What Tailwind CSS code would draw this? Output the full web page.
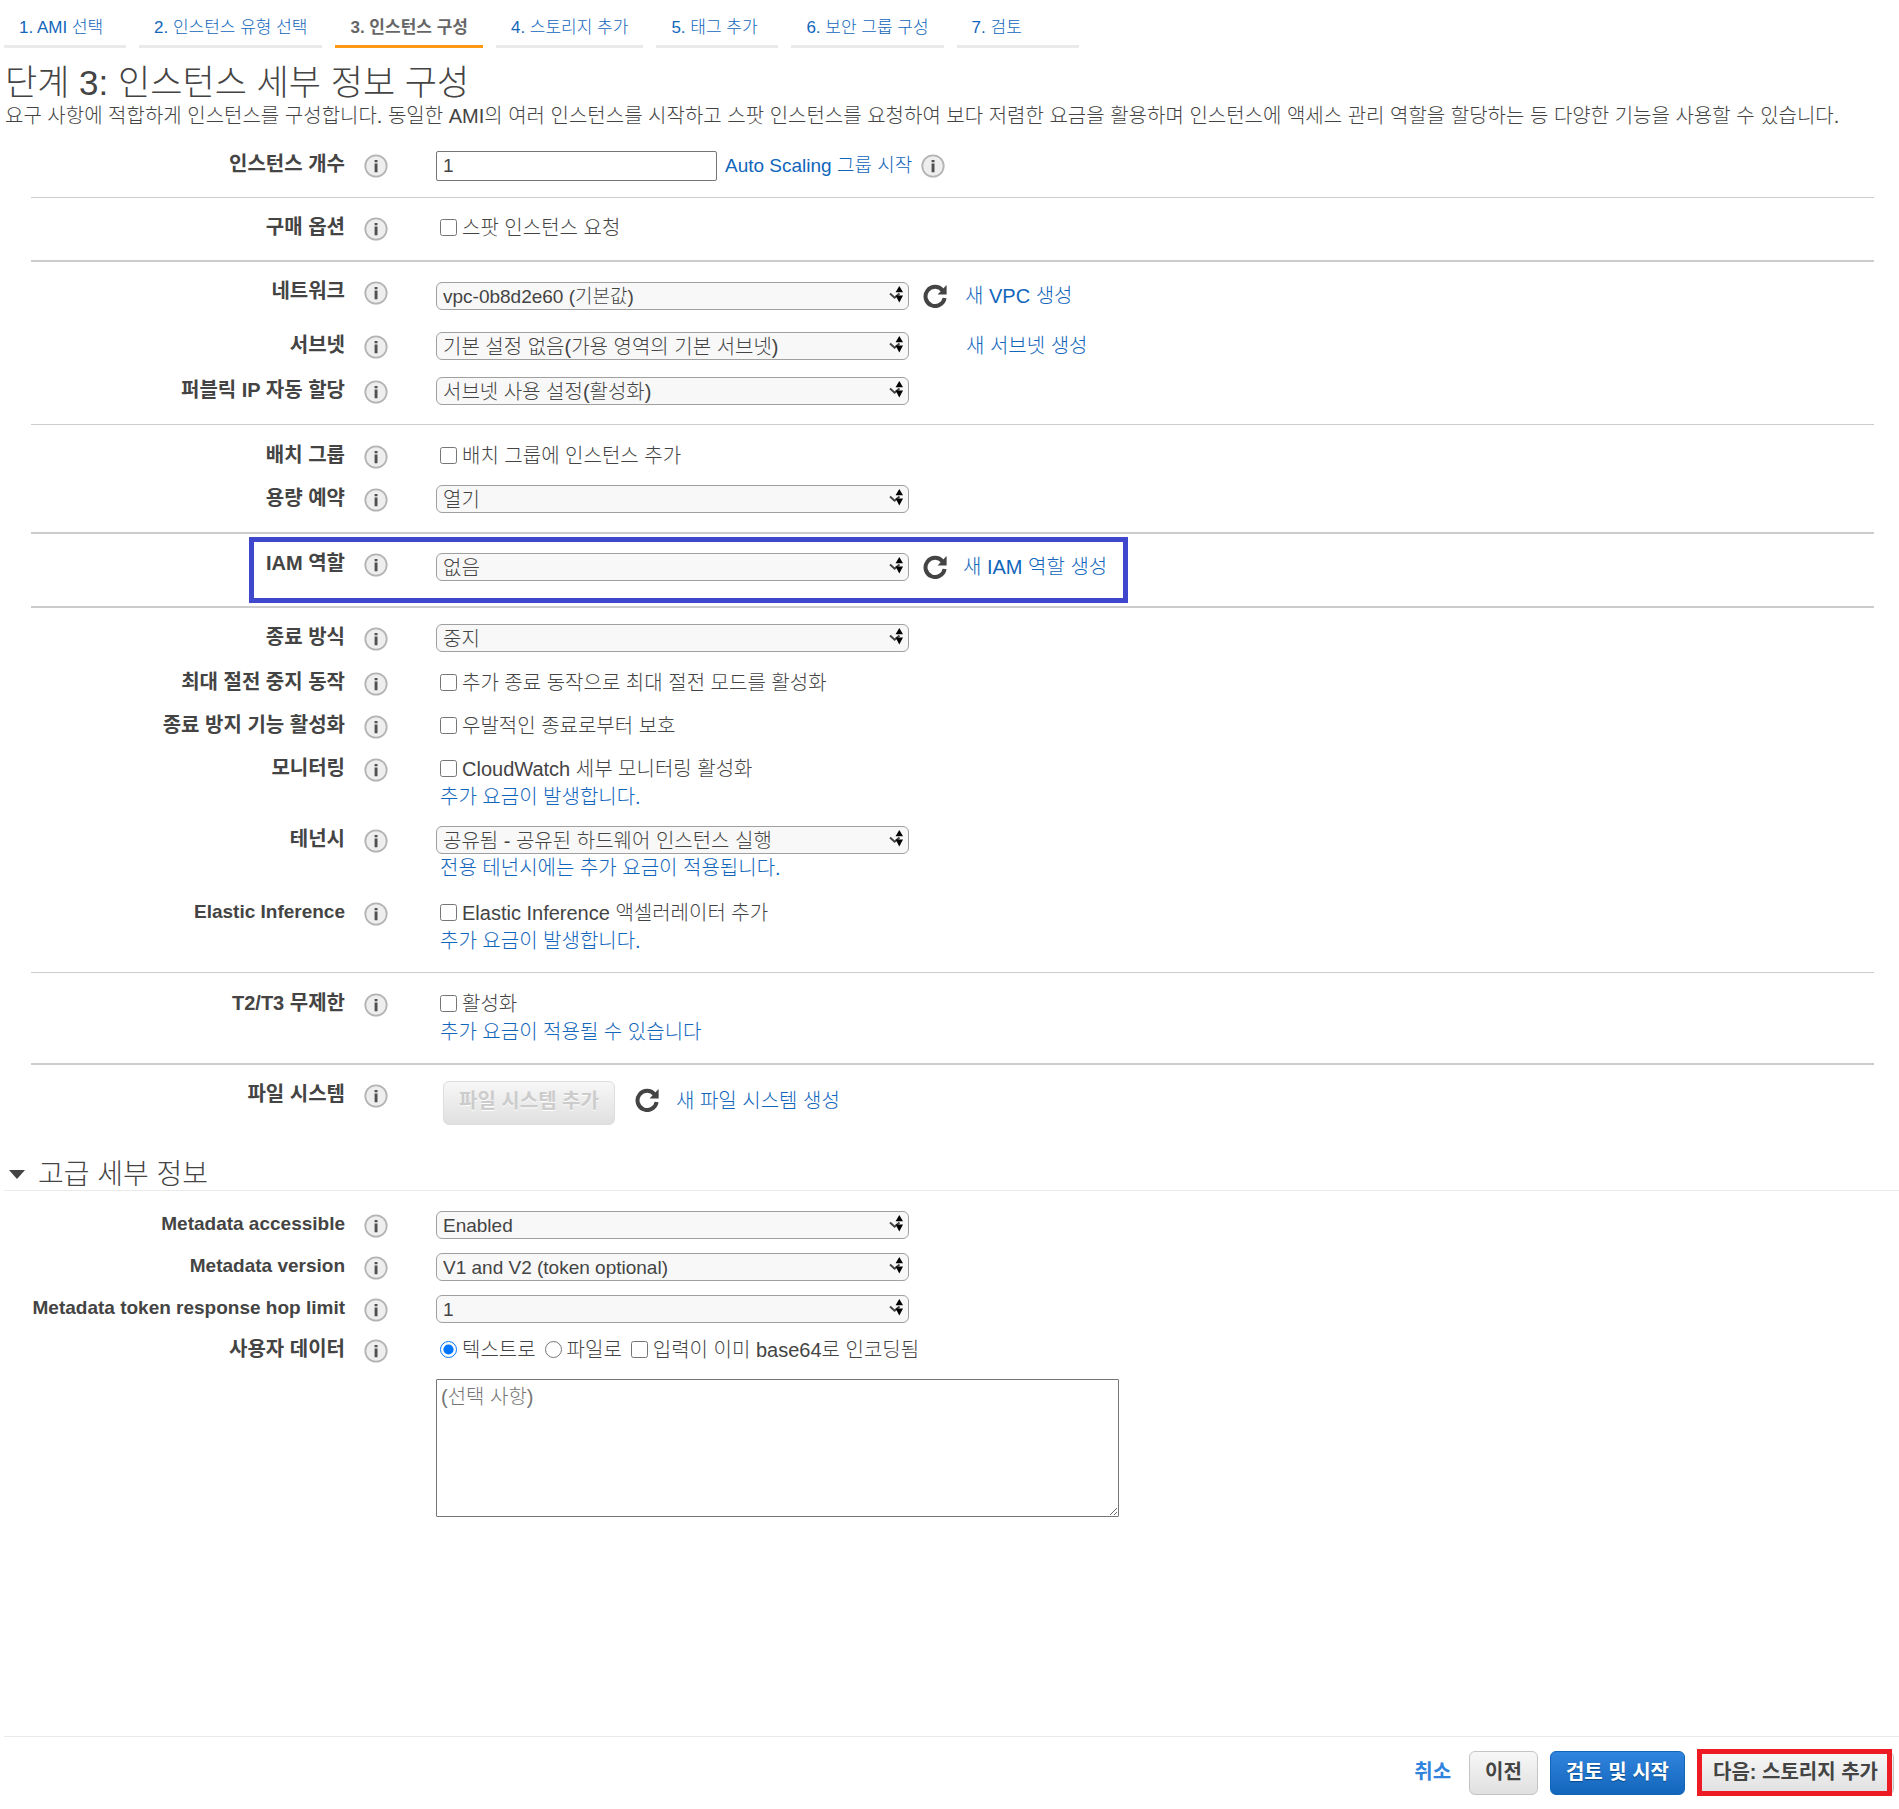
<!DOCTYPE html>
<html lang="ko">
<head>
    <meta charset="UTF-8">
    <meta name="viewport" content="width=device-width, initial-scale=1.0">
    <title>인스턴스 세부 정보 구성</title>
    <script src="https://cdn.jsdelivr.net/npm/@tailwindcss/browser@4"></script>
</head>
<body class="flex flex-col min-h-screen bg-white text-[#444] text-[20px] leading-7 font-light font-['Liberation_Sans','Noto_Sans_CJK_KR',sans-serif]">
    <svg class="hidden">
        <symbol id="info" viewBox="0 0 24 24">
            <circle cx="12" cy="12" r="10.7" fill="#eee" stroke="#b4b4b4" stroke-width="1.8"/>
            <path d="M10.6 6h2.9v2.2h-2.9zM10.6 9.6h2.9v8.6h-2.9z" fill="#505050"/>
        </symbol>
        <symbol id="refresh" viewBox="0 0 24 24">
            <path d="M19.6 6.4A9.6 9.6 0 1 0 21.6 14" fill="none" stroke="#444" stroke-width="4"/>
            <path d="M23.6 1v9.4h-9z" fill="#444"/>
        </symbol>
        <symbol id="arrows" viewBox="0 0 14 17">
            <path d="M1 7.5l4.6 4.2L10.5 7.5" fill="none" stroke="#444" stroke-width="2"/>
            <path d="M10.3 0l3.7 6.3H6.6zM6.6 9.5H14L10.3 16.5z" fill="#000"/>
        </symbol>
    </svg>

    <nav class="flex gap-[13px] pl-1 text-[17px] leading-6 text-[#1166bb] *:min-w-[122px] *:px-[15px] *:pt-4 *:pb-[5px] *:border-b-3 *:border-[#eaeaea]">
        <a href="#">1. AMI 선택</a>
        <a href="#">2. 인스턴스 유형 선택</a>
        <a href="#" class="font-bold text-[#666] border-[#ff9914]!">3. 인스턴스 구성</a>
        <a href="#">4. 스토리지 추가</a>
        <a href="#">5. 태그 추가</a>
        <a href="#">6. 보안 그룹 구성</a>
        <a href="#">7. 검토</a>
    </nav>

    <header class="pl-[5px] pt-[15px]">
        <h1 class="text-[35px] leading-10">단계 3: 인스턴스 세부 정보 구성</h1>
        <p class="leading-[26px]">요구 사항에 적합하게 인스턴스를 구성합니다. 동일한 AMI의 여러 인스턴스를 시작하고 스팟 인스턴스를 요청하여 보다 저렴한 요금을 활용하며 인스턴스에 액세스 관리 역할을 할당하는 등 다양한 기능을 사용할 수 있습니다.</p>
    </header>

    <main class="pl-[31px] pr-[25px]">
        <!-- count -->
        <section class="pt-[22px] border-b border-[#ccc]">
            <div class="flex items-start pb-4">
                <label for="count" class="w-[314px] text-right font-bold leading-[26px]">인스턴스 개수</label>
                <svg class="size-6 mt-[3px] ml-[19px] mr-12"><use href="#info"/></svg>
                <div class="flex items-center">
                    <input id="count" type="text" value="1" class="w-[281px] h-[30px] px-[6px] text-[19px] border border-[#767676] rounded-[2px]">
                    <a href="#" class="ml-2 text-[19px] text-[#1166bb]">Auto Scaling 그룹 시작</a>
                    <svg class="size-6 ml-[9px]"><use href="#info"/></svg>
                </div>
            </div>
        </section>

        <!-- purchasing -->
        <section class="pt-4 border-b-2 border-[#ccc]">
            <div class="flex items-start pb-[18px]">
                <span class="w-[314px] text-right font-bold leading-[26px]">구매 옵션</span>
                <svg class="size-6 mt-[3px] ml-[19px] mr-12"><use href="#info"/></svg>
                <label class="flex items-center gap-[5px] pl-1"><input type="checkbox" class="size-[17px] mb-[2px]">스팟 인스턴스 요청</label>
            </div>
        </section>

        <!-- network -->
        <section class="pt-4 border-b border-[#ccc]">
            <div class="flex items-start pb-[22px]">
                <label for="network" class="w-[314px] text-right font-bold leading-[26px]">네트워크</label>
                <svg class="size-6 mt-[3px] ml-[19px] mr-12"><use href="#info"/></svg>
                <div class="flex items-center pt-1">
                    <div class="relative w-[473px]">
                        <select id="network" class="block w-full h-7 px-[6px] text-[19px] appearance-none border border-[#a0a0a0] rounded-[6px] bg-[#f8f8f8]"><option>vpc-0b8d2e60 (기본값)</option></select>
                        <svg class="absolute right-[6px] top-1 w-[14px] h-[17px] pointer-events-none"><use href="#arrows"/></svg>
                    </div>
                    <button type="button" aria-label="새로 고침" class="ml-[14px]"><svg class="size-6"><use href="#refresh"/></svg></button>
                    <a href="#" class="ml-[18px] text-[#1166bb]">새 VPC 생성</a>
                </div>
            </div>
            <div class="flex items-start pb-[17px]">
                <label for="subnet" class="w-[314px] text-right font-bold leading-[26px]">서브넷</label>
                <svg class="size-6 mt-[3px] ml-[19px] mr-12"><use href="#info"/></svg>
                <div class="flex items-center">
                    <div class="relative w-[473px]">
                        <select id="subnet" class="block w-full h-7 px-[6px] appearance-none border border-[#a0a0a0] rounded-[6px] bg-[#f8f8f8]"><option>기본 설정 없음(가용 영역의 기본 서브넷)</option></select>
                        <svg class="absolute right-[6px] top-1 w-[14px] h-[17px] pointer-events-none"><use href="#arrows"/></svg>
                    </div>
                    <a href="#" class="ml-[57px] text-[#1166bb]">새 서브넷 생성</a>
                </div>
            </div>
            <div class="flex items-start pb-[19px]">
                <label for="public-ip" class="w-[314px] text-right font-bold leading-[26px]">퍼블릭 IP 자동 할당</label>
                <svg class="size-6 mt-[3px] ml-[19px] mr-12"><use href="#info"/></svg>
                <div class="relative w-[473px]">
                    <select id="public-ip" class="block w-full h-7 px-[6px] appearance-none border border-[#a0a0a0] rounded-[6px] bg-[#f8f8f8]"><option>서브넷 사용 설정(활성화)</option></select>
                    <svg class="absolute right-[6px] top-1 w-[14px] h-[17px] pointer-events-none"><use href="#arrows"/></svg>
                </div>
            </div>
        </section>

        <!-- placement and capacity -->
        <section class="pt-[17px] border-b-2 border-[#ccc]">
            <div class="flex items-start pb-[15px]">
                <span class="w-[314px] text-right font-bold leading-[26px]">배치 그룹</span>
                <svg class="size-6 mt-[3px] ml-[19px] mr-12"><use href="#info"/></svg>
                <label class="flex items-center gap-[5px] pl-1"><input type="checkbox" class="size-[17px] mb-[2px]">배치 그룹에 인스턴스 추가</label>
            </div>
            <div class="flex items-start pb-[19px]">
                <label for="capacity" class="w-[314px] text-right font-bold leading-[26px]">용량 예약</label>
                <svg class="size-6 mt-[3px] ml-[19px] mr-12"><use href="#info"/></svg>
                <div class="relative w-[473px]">
                    <select id="capacity" class="block w-full h-7 px-[6px] appearance-none border border-[#a0a0a0] rounded-[6px] bg-[#f8f8f8]"><option>열기</option></select>
                    <svg class="absolute right-[6px] top-1 w-[14px] h-[17px] pointer-events-none"><use href="#arrows"/></svg>
                </div>
            </div>
        </section>

        <!-- IAM role, highlighted -->
        <section class="relative pt-4 border-b-2 border-[#ccc]">
            <div class="absolute left-[218px] top-[3px] w-[879px] h-[66px] border-5 border-[#3f48cc] pointer-events-none"></div>
            <div class="flex items-start pb-[25px]">
                <label for="iam" class="w-[314px] text-right font-bold leading-[26px]">IAM 역할</label>
                <svg class="size-6 mt-[3px] ml-[19px] mr-12"><use href="#info"/></svg>
                <div class="flex items-center pt-[3px]">
                    <div class="relative w-[473px]">
                        <select id="iam" class="block w-full h-7 px-[6px] appearance-none border border-[#a0a0a0] rounded-[6px] bg-[#f8f8f8]"><option>없음</option></select>
                        <svg class="absolute right-[6px] top-1 w-[14px] h-[17px] pointer-events-none"><use href="#arrows"/></svg>
                    </div>
                    <button type="button" aria-label="새로 고침" class="ml-[14px]"><svg class="size-6"><use href="#refresh"/></svg></button>
                    <a href="#" class="ml-4 text-[#1166bb]">새 IAM 역할 생성</a>
                </div>
            </div>
        </section>

        <!-- behaviour -->
        <section class="pt-4 border-b border-[#ccc]">
            <div class="flex items-start pb-[17px]">
                <label for="shutdown" class="w-[314px] text-right font-bold leading-[26px]">종료 방식</label>
                <svg class="size-6 mt-[3px] ml-[19px] mr-12"><use href="#info"/></svg>
                <div class="relative w-[473px]">
                    <select id="shutdown" class="block w-full h-7 px-[6px] appearance-none border border-[#a0a0a0] rounded-[6px] bg-[#f8f8f8]"><option>중지</option></select>
                    <svg class="absolute right-[6px] top-1 w-[14px] h-[17px] pointer-events-none"><use href="#arrows"/></svg>
                </div>
            </div>
            <div class="flex items-start pb-[15px]">
                <span class="w-[314px] text-right font-bold leading-[26px]">최대 절전 중지 동작</span>
                <svg class="size-6 mt-[3px] ml-[19px] mr-12"><use href="#info"/></svg>
                <label class="flex items-center gap-[5px] pl-1"><input type="checkbox" class="size-[17px] mb-[2px]">추가 종료 동작으로 최대 절전 모드를 활성화</label>
            </div>
            <div class="flex items-start pb-[15px]">
                <span class="w-[314px] text-right font-bold leading-[26px]">종료 방지 기능 활성화</span>
                <svg class="size-6 mt-[3px] ml-[19px] mr-12"><use href="#info"/></svg>
                <label class="flex items-center gap-[5px] pl-1"><input type="checkbox" class="size-[17px] mb-[2px]">우발적인 종료로부터 보호</label>
            </div>
            <div class="flex items-start pb-[15px]">
                <span class="w-[314px] text-right font-bold leading-[26px]">모니터링</span>
                <svg class="size-6 mt-[3px] ml-[19px] mr-12"><use href="#info"/></svg>
                <div class="pl-1">
                    <label class="flex items-center gap-[5px]"><input type="checkbox" class="size-[17px] mb-[2px]">CloudWatch 세부 모니터링 활성화</label>
                    <a href="#" class="block text-[#1166bb]">추가 요금이 발생합니다.</a>
                </div>
            </div>
            <div class="flex items-start pb-[17px]">
                <label for="tenancy" class="w-[314px] text-right font-bold leading-[26px]">테넌시</label>
                <svg class="size-6 mt-[3px] ml-[19px] mr-12"><use href="#info"/></svg>
                <div>
                    <div class="relative w-[473px]">
                        <select id="tenancy" class="block w-full h-7 px-[6px] appearance-none border border-[#a0a0a0] rounded-[6px] bg-[#f8f8f8]"><option>공유됨 - 공유된 하드웨어 인스턴스 실행</option></select>
                        <svg class="absolute right-[6px] top-1 w-[14px] h-[17px] pointer-events-none"><use href="#arrows"/></svg>
                    </div>
                    <a href="#" class="block pl-1 text-[#1166bb]">전용 테넌시에는 추가 요금이 적용됩니다.</a>
                </div>
            </div>
            <div class="flex items-start pb-[17px]">
                <span class="w-[314px] text-right font-bold leading-[26px] text-[19px]">Elastic Inference</span>
                <svg class="size-6 mt-[3px] ml-[19px] mr-12"><use href="#info"/></svg>
                <div class="pl-1">
                    <label class="flex items-center gap-[5px]"><input type="checkbox" class="size-[17px] mb-[2px]">Elastic Inference 액셀러레이터 추가</label>
                    <a href="#" class="block text-[#1166bb]">추가 요금이 발생합니다.</a>
                </div>
            </div>
        </section>

        <!-- credits -->
        <section class="pt-[17px] border-b-2 border-[#ccc]">
            <div class="flex items-start pb-[17px]">
                <span class="w-[314px] text-right font-bold leading-[26px]">T2/T3 무제한</span>
                <svg class="size-6 mt-[3px] ml-[19px] mr-12"><use href="#info"/></svg>
                <div class="pl-1">
                    <label class="flex items-center gap-[5px]"><input type="checkbox" class="size-[17px] mb-[2px]">활성화</label>
                    <a href="#" class="block text-[#1166bb]">추가 요금이 적용될 수 있습니다</a>
                </div>
            </div>
        </section>

        <!-- file systems -->
        <section class="pt-4">
            <div class="flex items-start">
                <span class="w-[314px] text-right font-bold leading-[26px]">파일 시스템</span>
                <svg class="size-6 mt-[3px] ml-[19px] mr-12"><use href="#info"/></svg>
                <div class="flex items-start pl-[7px]">
                    <button type="button" disabled class="h-11 px-[15px] pb-1 font-bold text-[#ccc] border border-[#ddd] rounded-[6px] bg-linear-to-b from-[#f7f7f7] to-[#e0e0e0] text-shadow-[0_1px_0_#fff]">파일 시스템 추가</button>
                    <button type="button" aria-label="새로 고침" class="ml-5 mt-[7px]"><svg class="size-6"><use href="#refresh"/></svg></button>
                    <a href="#" class="ml-[17px] mt-[6px] text-[#1166bb]">새 파일 시스템 생성</a>
                </div>
            </div>
        </section>
    </main>

    <!-- advanced details -->
    <h2 class="flex items-center gap-[13px] ml-1 mt-[35px] pl-[5px] text-[28px] leading-[30px] border-b border-[#eaeaea]">
        <svg class="w-4 h-[9px] mb-[2px]" viewBox="0 0 16 9"><path d="M0 0h16L8 9z" fill="#444"/></svg>
        고급 세부 정보
    </h2>
    <section class="pl-[31px] pr-[25px] pt-5 pb-8">
        <div class="flex items-start pb-[14px]">
            <label for="meta-access" class="w-[314px] text-right font-bold leading-[26px] text-[19px]">Metadata accessible</label>
            <svg class="size-6 mt-[3px] ml-[19px] mr-12"><use href="#info"/></svg>
            <div class="relative w-[473px]">
                <select id="meta-access" class="block w-full h-7 px-[6px] text-[19px] appearance-none border border-[#a0a0a0] rounded-[6px] bg-[#f8f8f8]"><option>Enabled</option></select>
                <svg class="absolute right-[6px] top-1 w-[14px] h-[17px] pointer-events-none"><use href="#arrows"/></svg>
            </div>
        </div>
        <div class="flex items-start pb-[14px]">
            <label for="meta-version" class="w-[314px] text-right font-bold leading-[26px] text-[19px]">Metadata version</label>
            <svg class="size-6 mt-[3px] ml-[19px] mr-12"><use href="#info"/></svg>
            <div class="relative w-[473px]">
                <select id="meta-version" class="block w-full h-7 px-[6px] text-[19px] appearance-none border border-[#a0a0a0] rounded-[6px] bg-[#f8f8f8]"><option>V1 and V2 (token optional)</option></select>
                <svg class="absolute right-[6px] top-1 w-[14px] h-[17px] pointer-events-none"><use href="#arrows"/></svg>
            </div>
        </div>
        <div class="flex items-start pb-[13px]">
            <label for="meta-hop" class="w-[314px] text-right font-bold leading-[26px] text-[19px]">Metadata token response hop limit</label>
            <svg class="size-6 mt-[3px] ml-[19px] mr-12"><use href="#info"/></svg>
            <div class="relative w-[473px]">
                <select id="meta-hop" class="block w-full h-7 px-[6px] text-[19px] appearance-none border border-[#a0a0a0] rounded-[6px] bg-[#f8f8f8]"><option>1</option></select>
                <svg class="absolute right-[6px] top-1 w-[14px] h-[17px] pointer-events-none"><use href="#arrows"/></svg>
            </div>
        </div>
        <div class="flex items-start">
            <label for="user-data" class="w-[314px] text-right font-bold leading-[26px]">사용자 데이터</label>
            <svg class="size-6 mt-[3px] ml-[19px] mr-12"><use href="#info"/></svg>
            <div>
                <div class="flex items-center gap-[9px] pl-1 *:flex *:items-center *:gap-[5px]">
                    <label><input type="radio" name="data-type" checked class="size-[17px] mb-[2px]">텍스트로</label>
                    <label><input type="radio" name="data-type" class="size-[17px] mb-[2px]">파일로</label>
                    <label><input type="checkbox" class="size-[17px] mb-[2px]">입력이 이미 base64로 인코딩됨</label>
                </div>
                <textarea id="user-data" placeholder="(선택 사항)" class="block w-[683px] h-[138px] mt-[15px] px-1 py-[3px] border border-[#767676] rounded-[1px] placeholder:text-[#757575]"></textarea>
            </div>
        </div>
    </section>

    <footer class="flex justify-end items-center gap-3 ml-1 mt-auto pr-[5px] py-[14px] border-t border-[#eaeaea] font-bold">
        <a href="#" class="mr-[6px] pb-[2px] text-[#3184dd]">취소</a>
        <button type="button" class="h-11 px-[15px] pb-[2px] border border-[#c4c4c4] rounded-[6px] bg-linear-to-b from-[#f7f7f7] to-[#e0e0e0]">이전</button>
        <button type="button" class="h-11 px-[15px] pb-[2px] text-white border border-[#1166bb] rounded-[6px] bg-linear-to-b from-[#3184dd] to-[#1166bb] text-shadow-[0_1px_1px_#0a4a8a]">검토 및 시작</button>
        <div class="relative">
            <button type="button" class="h-11 px-[15px] pb-[2px] border border-[#c4c4c4] rounded-[6px] bg-linear-to-b from-[#f7f7f7] to-[#e0e0e0]">다음: 스토리지 추가</button>
            <div class="absolute left-0 right-[2px] -top-[2px] h-[47px] border-5 border-[#ed1c24] pointer-events-none"></div>
        </div>
    </footer>
</body>
</html>
